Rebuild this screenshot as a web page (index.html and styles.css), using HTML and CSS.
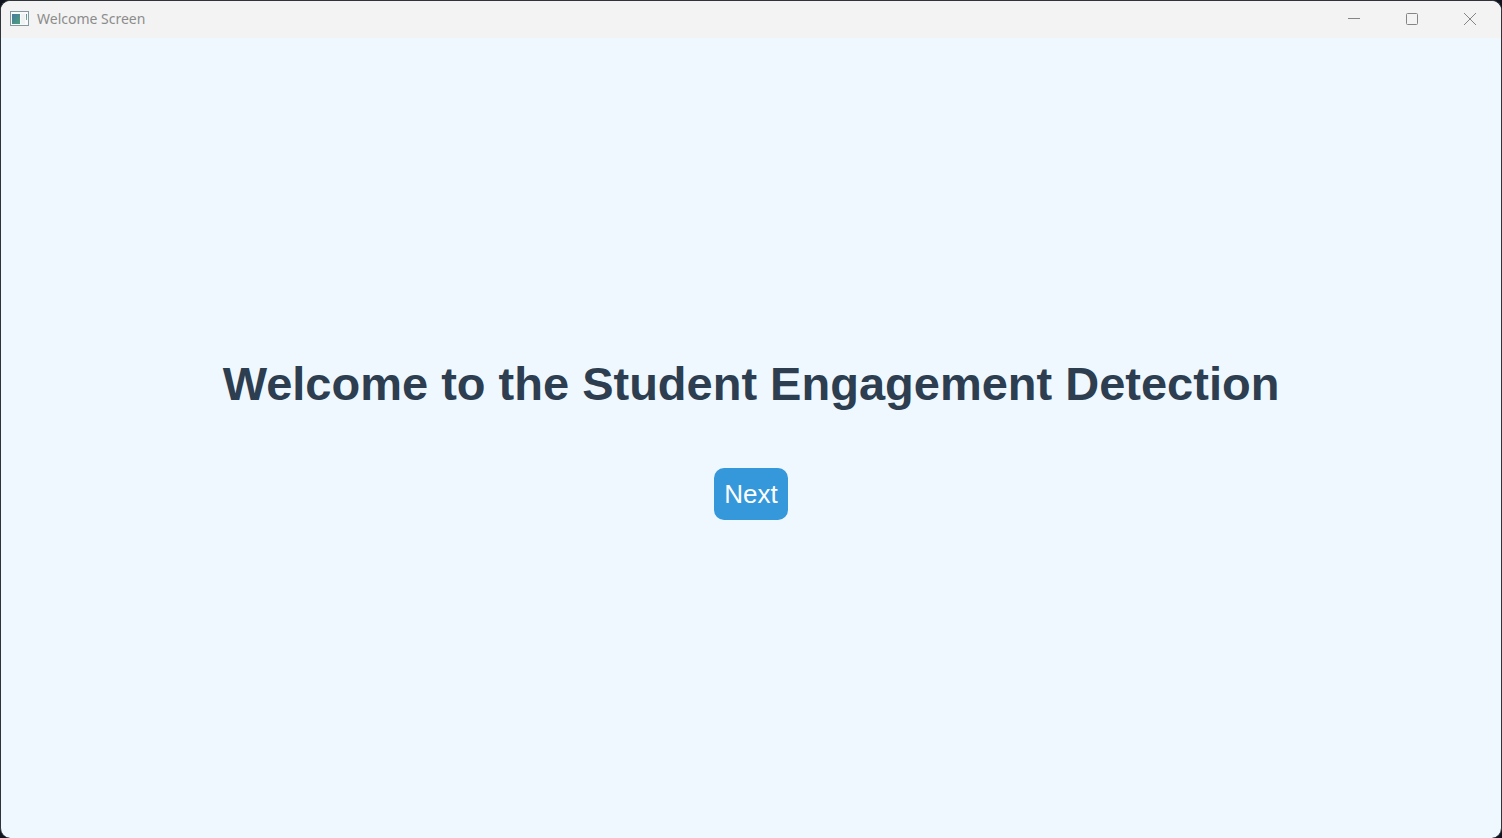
FILE: index.html
```html
<!DOCTYPE html>
<html lang="en">
<head>
<meta charset="utf-8">
<title>Welcome Screen</title>
<link rel="stylesheet" href="styles.css">
</head>
<body>
<div class="window">
  <header class="titlebar">
    <svg class="app-icon" viewBox="0 0 20 16" aria-hidden="true">
      <defs>
        <linearGradient id="pane" x1="0" y1="0" x2="1" y2="1"><stop offset="0" stop-color="#467aa0"/><stop offset="1" stop-color="#4fa07a"/></linearGradient>
        <linearGradient id="strip" x1="0" y1="0" x2="0" y2="1"><stop offset="0" stop-color="#5c8fa5"/><stop offset="1" stop-color="#6fb58f"/></linearGradient>
      </defs>
      <rect x="0.5" y="0.5" width="18" height="14" fill="#fafafa" stroke="#8499a0"/>
      <rect x="2" y="3" width="8" height="10" fill="url(#pane)"/>
      <rect x="11" y="3" width="4" height="10" fill="#f0f3f4"/>
      <rect x="16" y="3" width="1" height="6" fill="url(#strip)"/>
    </svg>
    <span class="title">Welcome Screen</span>
    <div class="controls">
      <button class="control" type="button" aria-label="Minimize"><svg viewBox="0 0 14 14"><path d="M1 6.5h12"/></svg></button>
      <button class="control" type="button" aria-label="Maximize"><svg viewBox="0 0 14 14"><rect x="1.5" y="1.5" width="11" height="11" rx="1"/></svg></button>
      <button class="control" type="button" aria-label="Close"><svg viewBox="0 0 14 14"><path d="M1 1l12 12M13 1L1 13"/></svg></button>
    </div>
  </header>
  <main class="content">
    <h1 class="heading">Welcome to the Student Engagement Detection</h1>
    <button class="next" type="button">Next</button>
  </main>
</div>
</body>
</html>
```
FILE: styles.css
```css
* { box-sizing: border-box; }
body { margin: 0; background: #10141e; }
.window {
  display: flex;
  flex-direction: column;
  min-height: 100vh;
  overflow: hidden;
  border: 1px solid #30343a;
  border-bottom: 0;
  border-radius: 10px;
  background: #f0f8ff;
}
.titlebar {
  display: flex;
  align-items: center;
  height: 37px;
  padding: 0 2px 2px 9px;
  background: #f3f3f3;
}
.app-icon { width: 20px; height: 16px; }
.title {
  flex: 1;
  margin-left: 7px;
  font: 14px/20px "Noto Sans", "Open Sans", sans-serif;
  color: #8c8c8c;
}
.controls { display: flex; height: 100%; }
.control {
  display: flex;
  align-items: center;
  justify-content: center;
  width: 58px;
  padding: 0;
  border: 0;
  background: none;
}
.control svg { width: 14px; height: 14px; fill: none; stroke: #858585; }
.content {
  flex: 1;
  display: flex;
  flex-direction: column;
  align-items: center;
  justify-content: center;
  gap: 56px;
}
.heading {
  margin: 0;
  font: bold 47px/56px "Liberation Sans", Arial, sans-serif;
  color: #2c3e50;
}
.next {
  padding: 10px;
  border: 0;
  border-radius: 10px;
  background: #3498db;
  color: #fff;
  font: 26px/32px "Liberation Sans", Arial, sans-serif;
}
```
